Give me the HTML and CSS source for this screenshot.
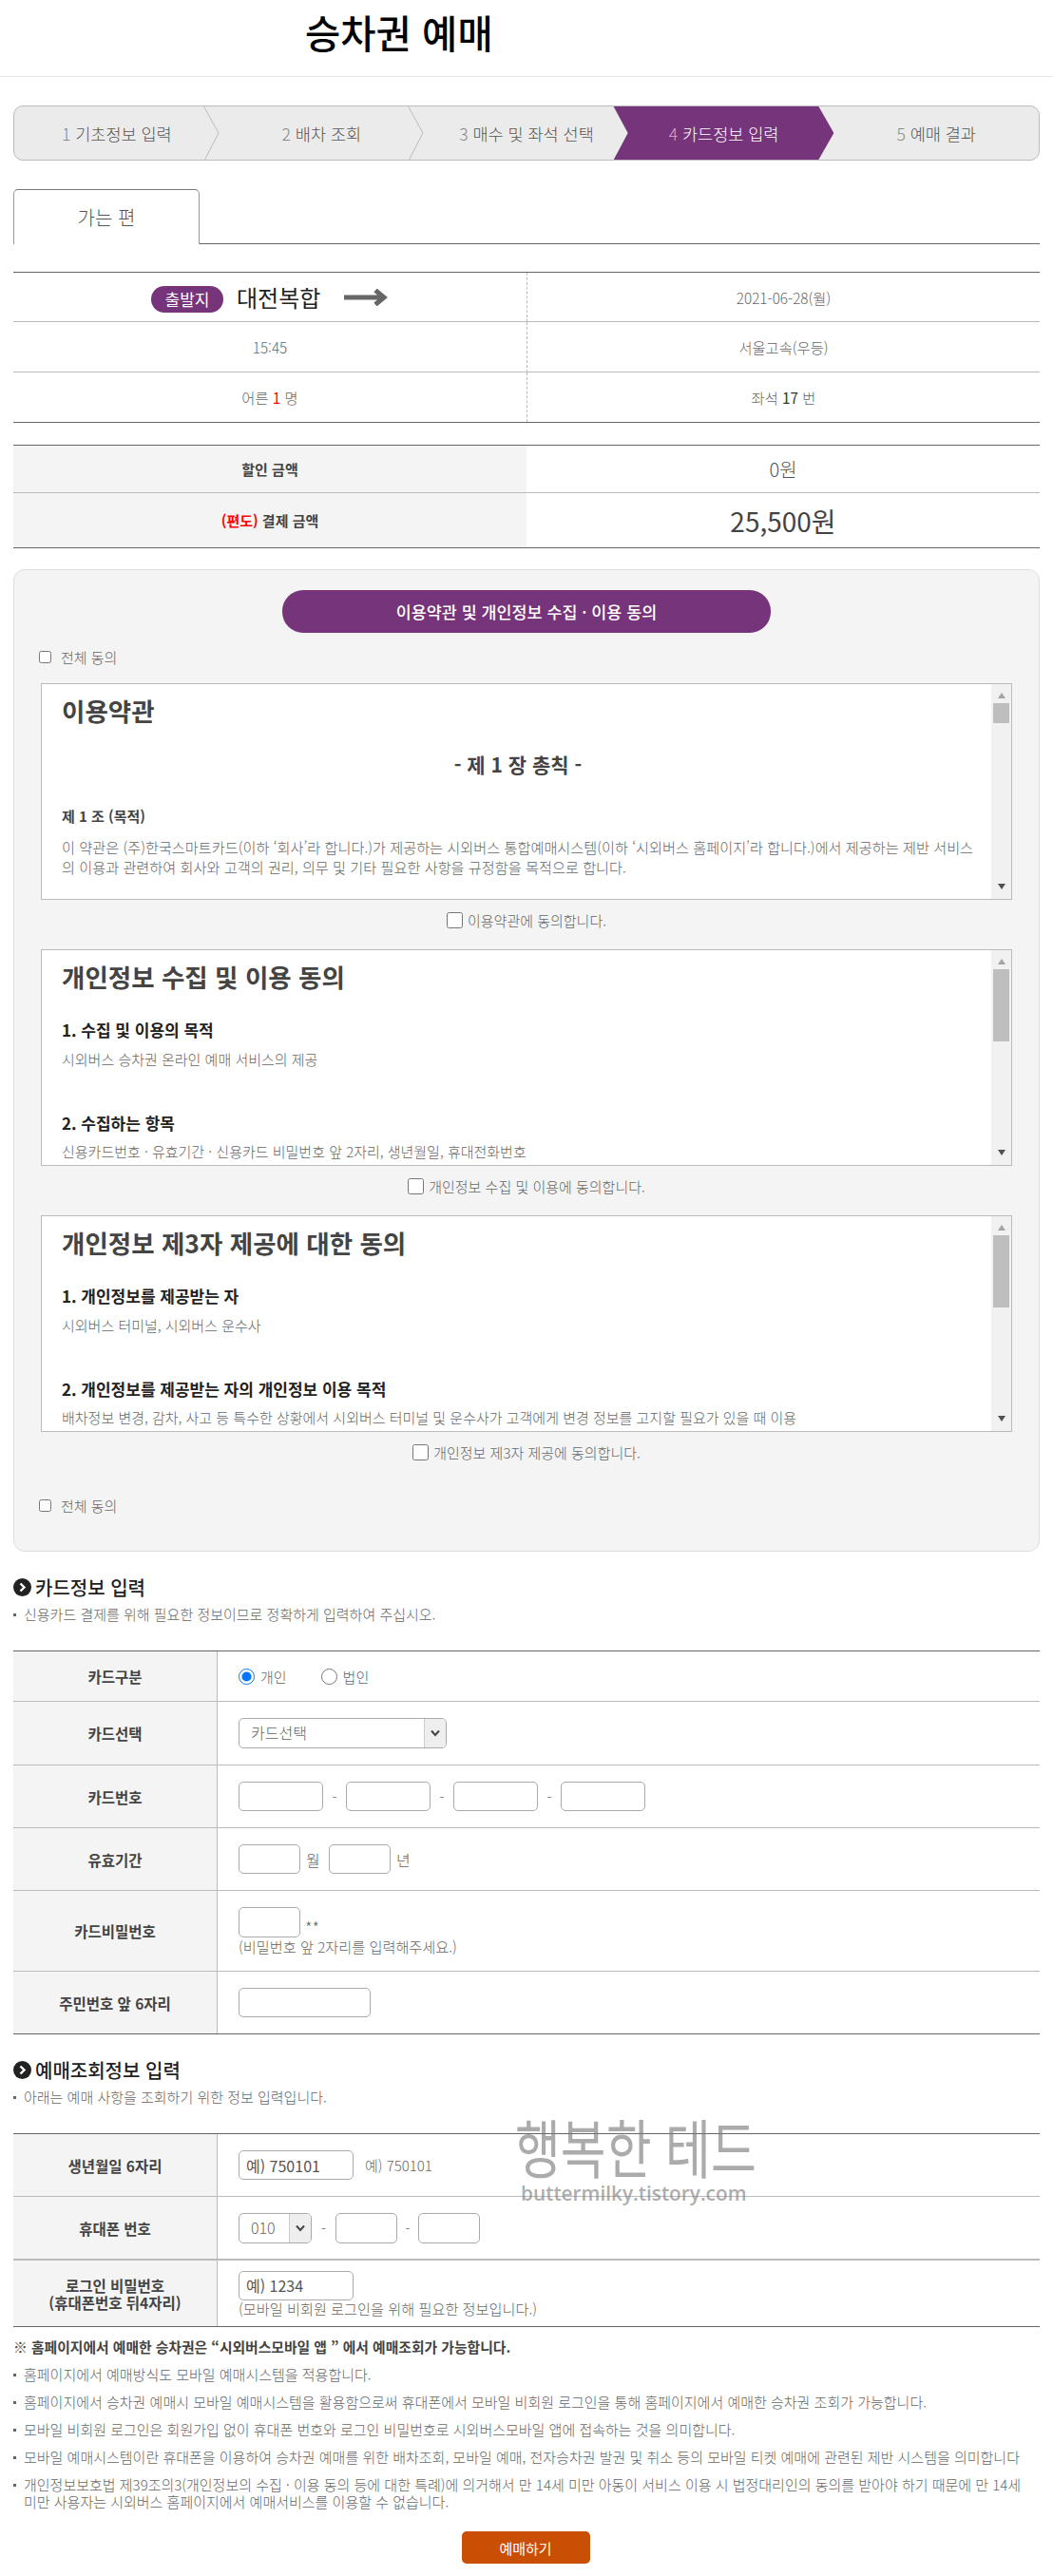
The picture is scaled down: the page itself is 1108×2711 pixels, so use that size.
FILE: index.html
```html
<!DOCTYPE html>
<html lang="ko">
<head>
    <meta charset="UTF-8">
    <meta name="viewport" content="width=device-width, initial-scale=1.0">
    <title>승차권 예매</title>
    <link rel="stylesheet" href="styles.css">
</head>
<body>
    <header class="top">
        <h1>승차권 예매</h1>
    </header>

    <main class="wrap">
        <ol class="steps">
            <li><span><em>1</em> 기초정보 입력</span><svg class="sep" viewBox="0 0 17 58"><path d="M0 0L16 29L1 58"/></svg></li>
            <li><span><em>2</em> 배차 조회</span><svg class="sep" viewBox="0 0 17 58"><path d="M0 0L16 29L1 58"/></svg></li>
            <li><span><em>3</em> 매수 및 좌석 선택</span><svg class="sep" viewBox="0 0 17 58"><path d="M0 0L16 29L1 58"/></svg></li>
            <li class="on"><span><em>4</em> 카드정보 입력</span></li>
            <li><span><em>5</em> 예매 결과</span></li>
        </ol>

        <div class="tabs"><a class="tab">가는 편</a></div>

        <table class="info">
            <tr class="r52">
                <td>
                    <div class="route">
                        <b class="badge">출발지</b>
                        <strong>대전복합</strong>
                        <svg class="go" viewBox="0 0 46 18"><path d="M0 9H42M33 1.5L42 9L33 16.5"/></svg>
                    </div>
                </td>
                <td>2021-06-28(월)</td>
            </tr>
            <tr>
                <td>15:45</td>
                <td>서울고속(우등)</td>
            </tr>
            <tr>
                <td>어른 <b class="red">1</b> 명</td>
                <td>좌석 <b class="num">17</b> 번</td>
            </tr>
        </table>

        <table class="pay">
            <tr class="r50">
                <th>할인 금액</th>
                <td class="zero">0원</td>
            </tr>
            <tr class="r58">
                <th><span class="red">(편도)</span> 결제 금액</th>
                <td class="total">25,500원</td>
            </tr>
        </table>

        <section class="agree">
            <h2 class="pill">이용약관 및 개인정보 수집 · 이용 동의</h2>
            <label class="all first"><input type="checkbox"> 전체 동의</label>

            <div class="term">
                <div class="term-text">
                    <h3>이용약관</h3>
                    <h4 class="chapter">- 제 1 장 총칙 -</h4>
                    <h5 class="article">제 1 조 (목적)</h5>
                    <p class="para">이 약관은 (주)한국스마트카드(이하 ‘회사’라 합니다.)가 제공하는 시외버스 통합예매시스템(이하 ‘시외버스 홈페이지’라 합니다.)에서 제공하는 제반 서비스<br>의 이용과 관련하여 회사와 고객의 권리, 의무 및 기타 필요한 사항을 규정함을 목적으로 합니다.</p>
                </div>
                <div class="bar"><i class="up"></i><i class="thumb"></i><i class="down"></i></div>
            </div>
            <label class="ok"><input type="checkbox"> 이용약관에 동의합니다.</label>

            <div class="term">
                <div class="term-text">
                    <h3>개인정보 수집 및 이용 동의</h3>
                    <h4 class="sub">1. 수집 및 이용의 목적</h4>
                    <p class="line">시외버스 승차권 온라인 예매 서비스의 제공</p>
                    <h4 class="sub next">2. 수집하는 항목</h4>
                    <p class="line">신용카드번호 · 유효기간 · 신용카드 비밀번호 앞 2자리, 생년월일, 휴대전화번호</p>
                </div>
                <div class="bar"><i class="up"></i><i class="thumb long"></i><i class="down"></i></div>
            </div>
            <label class="ok"><input type="checkbox"> 개인정보 수집 및 이용에 동의합니다.</label>

            <div class="term">
                <div class="term-text">
                    <h3>개인정보 제3자 제공에 대한 동의</h3>
                    <h4 class="sub">1. 개인정보를 제공받는 자</h4>
                    <p class="line">시외버스 터미널, 시외버스 운수사</p>
                    <h4 class="sub next">2. 개인정보를 제공받는 자의 개인정보 이용 목적</h4>
                    <p class="line">배차정보 변경, 감차, 사고 등 특수한 상황에서 시외버스 터미널 및 운수사가 고객에게 변경 정보를 고지할 필요가 있을 때 이용</p>
                </div>
                <div class="bar"><i class="up"></i><i class="thumb long"></i><i class="down"></i></div>
            </div>
            <label class="ok"><input type="checkbox"> 개인정보 제3자 제공에 동의합니다.</label>

            <label class="all last"><input type="checkbox"> 전체 동의</label>
        </section>

        <h2 class="sec">
            <svg viewBox="0 0 19 19"><circle cx="9.5" cy="9.5" r="9.5"/><path d="M7.5 5.5L11.5 9.5L7.5 13.5"/></svg>
            카드정보 입력
        </h2>
        <p class="sec-note">신용카드 결제를 위해 필요한 정보이므로 정확하게 입력하여 주십시오.</p>

        <table class="form">
            <tr class="h53">
                <th>카드구분</th>
                <td>
                    <div class="field">
                        <label class="radio"><input type="radio" name="kind" checked> 개인</label>
                        <label class="radio"><input type="radio" name="kind"> 법인</label>
                    </div>
                </td>
            </tr>
            <tr class="h67">
                <th>카드선택</th>
                <td>
                    <div class="select wide"><span>카드선택</span><i><svg viewBox="0 0 10 8"><path d="M1 1.5L5 6L9 1.5"/></svg></i></div>
                </td>
            </tr>
            <tr class="h66">
                <th>카드번호</th>
                <td>
                    <div class="field">
                        <input class="in w89" type="text"><span class="dash">-</span>
                        <input class="in w89" type="text"><span class="dash">-</span>
                        <input class="in w89" type="text"><span class="dash">-</span>
                        <input class="in w89" type="text">
                    </div>
                </td>
            </tr>
            <tr class="h66">
                <th>유효기간</th>
                <td>
                    <div class="field">
                        <input class="in w65" type="text"><span class="unit">월</span>
                        <input class="in w65" type="text"><span class="unit">년</span>
                    </div>
                </td>
            </tr>
            <tr class="h85">
                <th>카드비밀번호</th>
                <td>
                    <div class="field">
                        <input class="in w65 tall" type="password"><span class="stars">**</span>
                    </div>
                    <p class="hint">(비밀번호 앞 2자리를 입력해주세요.)</p>
                </td>
            </tr>
            <tr class="h66">
                <th>주민번호 앞 6자리</th>
                <td><input class="in w139" type="text"></td>
            </tr>
        </table>

        <h2 class="sec">
            <svg viewBox="0 0 19 19"><circle cx="9.5" cy="9.5" r="9.5"/><path d="M7.5 5.5L11.5 9.5L7.5 13.5"/></svg>
            예매조회정보 입력
        </h2>
        <p class="sec-note">아래는 예매 사항을 조회하기 위한 정보 입력입니다.</p>

        <table class="form second">
            <tr class="h66">
                <th>생년월일 6자리</th>
                <td>
                    <div class="field">
                        <input class="in w121" type="text" placeholder="예) 750101">
                        <span class="eg">예) 750101</span>
                    </div>
                </td>
            </tr>
            <tr class="h67 thick">
                <th>휴대폰 번호</th>
                <td>
                    <div class="field">
                        <div class="select narrow"><span>010</span><i><svg viewBox="0 0 10 8"><path d="M1 1.5L5 6L9 1.5"/></svg></i></div>
                        <span class="dash d1">-</span>
                        <input class="in w65 tall" type="text"><span class="dash d2">-</span>
                        <input class="in w65 tall" type="text">
                    </div>
                </td>
            </tr>
            <tr class="h70">
                <th>로그인 비밀번호<br>(휴대폰번호 뒤4자리)</th>
                <td>
                    <input class="in w121" type="text" placeholder="예) 1234">
                    <p class="hint tight">(모바일 비회원 로그인을 위해 필요한 정보입니다.)</p>
                </td>
            </tr>
        </table>

        <p class="notice">※ 홈페이지에서 예매한 승차권은 “시외버스모바일 앱 ” 에서 예매조회가 가능합니다.</p>
        <ul class="list">
            <li>홈페이지에서 예매방식도 모바일 예매시스템을 적용합니다.</li>
            <li>홈페이지에서 승차권 예매시 모바일 예매시스템을 활용함으로써 휴대폰에서 모바일 비회원 로그인을 통해 홈페이지에서 예매한 승차권 조회가 가능합니다.</li>
            <li>모바일 비회원 로그인은 회원가입 없이 휴대폰 번호와 로그인 비밀번호로 시외버스모바일 앱에 접속하는 것을 의미합니다.</li>
            <li>모바일 예매시스템이란 휴대폰을 이용하여 승차권 예매를 위한 배차조회, 모바일 예매, 전자승차권 발권 및 취소 등의 모바일 티켓 예매에 관련된 제반 시스템을 의미합니다</li>
            <li>개인정보보호법 제39조의3(개인정보의 수집 · 이용 동의 등에 대한 특례)에 의거해서 만 14세 미만 아동이 서비스 이용 시 법정대리인의 동의를 받아야 하기 때문에 만 14세<br>미만 사용자는 시외버스 홈페이지에서 예매서비스를 이용할 수 없습니다.</li>
        </ul>

        <div class="submit"><button type="button">예매하기</button></div>
    </main>

    <div class="mark">
        <span class="mark-name">행복한 테드</span>
        <span class="mark-url">buttermilky.tistory.com</span>
    </div>
</body>
</html>
```

FILE: styles.css
```css
*{
    box-sizing: border-box;
}
body{
    margin: 0;
    position: relative;
    font-family: "Noto Sans CJK KR", "Noto Sans", sans-serif;
    font-size: 15px;
    font-weight: 300;
    color: #666;
    background: #fff;
}
h1, h2, h3, h4, h5, p, ol, ul{
    margin: 0;
    padding: 0;
}
table{
    width: 100%;
    border-collapse: separate;
    border-spacing: 0;
    table-layout: fixed;
}
td, th{
    padding: 0;
}

/* page title */
.top{
    height: 81px;
    border-bottom: 1px solid #e5e5e5;
    padding-left: 321px;
}
.top h1{
    font-size: 40.5px;
    line-height: 68px;
    font-weight: 500;
    color: #000;
}
.wrap{
    padding: 0 14px 11px;
}

/* steps */
.steps{
    list-style: none;
    display: flex;
    height: 58px;
    margin-top: 30px;
    background: #ebebeb;
    border: 1px solid #bbb;
    border-radius: 10px;
    overflow: hidden;
}
.steps li{
    flex: 0 0 20%;
    position: relative;
    display: flex;
    align-items: center;
    justify-content: center;
    font-size: 17.5px;
    color: #555;
}
.steps em{
    font-style: normal;
    color: #888;
}
.steps span{
    position: relative;
}
.sep{
    position: absolute;
    right: 0;
    top: -1px;
    width: 17px;
    height: 58px;
}
.sep path{
    fill: none;
    stroke: #bbb;
    stroke-width: 1;
}
.steps .on{
    color: #fff;
    padding-right: 16px;
}
.steps .on em{
    color: #d9a6e0;
}
.steps .on::before{
    content: "";
    position: absolute;
    top: 0;
    bottom: 0;
    left: -16px;
    right: 0;
    background: #76347a;
    clip-path: polygon(0 0, calc(100% - 16px) 0, 100% 50%, calc(100% - 16px) 100%, 0 100%, 15px 50%);
}

/* tab */
.tabs{
    display: flex;
    height: 58px;
    margin-top: 30px;
    border-bottom: 1px solid #666;
}
.tab{
    width: 196px;
    height: 58px;
    background: #fff;
    border: 1px solid #999;
    border-top-color: #777;
    border-bottom: 0;
    border-radius: 5px 5px 0 0;
    text-align: center;
    font-size: 20px;
    line-height: 58px;
    color: #555;
}

/* route info */
.info{
    margin-top: 29px;
    border-top: 1px solid #666;
    border-bottom: 1px solid #666;
    font-size: 15.3px;
    text-align: center;
}
.info td{
    height: 53px;
    border-bottom: 1px solid #bbb;
}
.info tr:last-child td{
    height: 52px;
    border-bottom: 0;
}
.info .r52 td{
    height: 52px;
}
.info td + td{
    border-left: 1px dashed #bbb;
}
.route{
    display: flex;
    align-items: center;
    padding-left: 145px;
}
.badge{
    width: 76px;
    height: 28px;
    margin-top: 4px;
    border-radius: 14px;
    background: #76347a;
    color: #fff;
    font-size: 17px;
    font-weight: 400;
    line-height: 28px;
}
.route strong{
    margin-left: 14px;
    font-size: 24px;
    font-weight: 400;
    color: #222;
}
.go{
    width: 46px;
    height: 18px;
    margin-left: 25px;
}
.go path{
    fill: none;
    stroke: #666;
    stroke-width: 5;
}
.red{
    color: #f00;
    font-weight: 400;
}
.num{
    color: #333;
    font-weight: 400;
}

/* price */
.pay{
    margin-top: 23px;
    border-top: 1px solid #666;
    border-bottom: 1px solid #666;
    text-align: center;
}
.pay th{
    background: #f4f4f4;
    font-size: 15px;
    font-weight: 700;
    color: #444;
}
.pay .r50 th, .pay .r50 td{
    height: 50px;
    border-bottom: 1px solid #bbb;
}
.pay .r58 th, .pay .r58 td{
    height: 57px;
}
.pay .red{
    font-weight: 700;
}
.zero{
    font-size: 20px;
    color: #555;
}
.total{
    font-size: 28px;
    font-weight: 400;
    color: #444;
}

/* agreement box */
.agree{
    margin-top: 22px;
    padding: 21px 28px 38px;
    background: #f4f4f4;
    border: 1px solid #ddd;
    border-radius: 12px;
}
.pill{
    width: 514px;
    height: 45px;
    margin: 0 auto;
    border-radius: 22px;
    background: #76347a;
    color: #fff;
    text-align: center;
    font-size: 17.4px;
    font-weight: 500;
    line-height: 45px;
}
.all{
    display: flex;
    align-items: center;
    height: 20px;
    margin-left: -2px;
    color: #666;
}
.all input{
    width: 13px;
    height: 13px;
    margin: 0 10px 0 0;
}
.all.first{
    margin-top: 15px;
    margin-bottom: 18px;
}
.all.last{
    margin-top: 36px;
}
.term{
    display: flex;
    height: 228px;
    background: #fff;
    border: 1px solid #bbb;
    overflow: hidden;
}
.term-text{
    flex: 1;
    min-width: 0;
    overflow: hidden;
    padding: 10px 18px 0 21px;
}
.term h3{
    font-size: 26.5px;
    line-height: 36px;
    font-weight: 700;
    color: #444;
}
.chapter{
    margin-top: 23px;
    font-size: 21px;
    line-height: 30px;
    font-weight: 700;
    color: #444;
    text-align: center;
}
.article{
    margin-top: 29px;
    font-size: 15px;
    line-height: 22px;
    font-weight: 700;
    color: #444;
}
.para{
    margin-top: 11px;
    font-size: 15.2px;
    line-height: 21px;
    white-space: nowrap;
}
.sub{
    margin-top: 25px;
    font-size: 17px;
    line-height: 26px;
    font-weight: 700;
    color: #222;
}
.sub.next{
    margin-top: 43px;
}
.line{
    margin-top: 7px;
    line-height: 22px;
    white-space: nowrap;
}
.sub.next + .line{
    margin-top: 6px;
}
.bar{
    flex: none;
    display: flex;
    flex-direction: column;
    align-items: center;
    width: 21px;
    background: #f1f1f1;
}
.up{
    margin-top: 9px;
    border-left: 4px solid transparent;
    border-right: 4px solid transparent;
    border-bottom: 6px solid #a3a3a3;
}
.thumb{
    width: 17px;
    height: 21px;
    margin-top: 5px;
    background: #bebebe;
}
.thumb.long{
    height: 76px;
}
.down{
    margin-top: auto;
    margin-bottom: 10px;
    border-left: 4px solid transparent;
    border-right: 4px solid transparent;
    border-top: 6px solid #505050;
}
.ok{
    display: flex;
    align-items: center;
    justify-content: center;
    height: 20px;
    margin: 11px 0 21px;
}
.ok input{
    width: 17px;
    height: 17px;
    margin: 0 5px 0 0;
}

/* section titles */
.sec{
    display: flex;
    align-items: center;
    gap: 4px;
    height: 24px;
    margin-top: 25px;
    font-size: 20px;
    font-weight: 500;
    color: #222;
}
.sec svg{
    width: 19px;
    height: 19px;
}
.sec circle{
    fill: #222;
}
.sec path{
    fill: none;
    stroke: #fff;
    stroke-width: 2.4;
}
.sec-note{
    position: relative;
    margin-top: 7px;
    padding-left: 11px;
    line-height: 20px;
}
.sec-note::before, .list li::before{
    content: "";
    position: absolute;
    left: 0;
    top: 9px;
    width: 3px;
    height: 3px;
    background: #666;
}

/* forms */
.form{
    margin-top: 28px;
    border-top: 1px solid #666;
    border-bottom: 1px solid #666;
}
.form th{
    width: 215px;
    background: #f4f4f4;
    border-right: 1px solid #bbb;
    border-bottom: 1px solid #bbb;
    font-size: 15.5px;
    line-height: 18px;
    font-weight: 700;
    color: #444;
}
.form td{
    padding-left: 22px;
    border-bottom: 1px solid #bbb;
}
.form .thick th, .form .thick td{
    border-bottom-width: 2px;
}
.h53 th, .h53 td{ height: 53px; }
.h66 th, .h66 td{ height: 66px; }
.h67 th, .h67 td{ height: 67px; }
.h70 th, .h70 td{ height: 70px; }
.h85 th, .h85 td{ height: 85px; }
.form tr:last-child th, .form tr:last-child td{
    height: 65px;
    border-bottom: 0;
}
.form.second tr:last-child th, .form.second tr:last-child td{
    height: 69px;
}
.field{
    display: flex;
    align-items: center;
}
.radio{
    display: flex;
    align-items: center;
    margin-right: 36px;
}
.radio input{
    width: 17px;
    height: 17px;
    margin: 0 6px 0 0;
}
.in{
    display: block;
    height: 31px;
    margin: 0;
    padding: 0 7px;
    background: #fff;
    border: 1px solid #aaa;
    border-radius: 5px;
    font-family: inherit;
    font-size: 16px;
    font-weight: 400;
    color: #555;
}
.in::placeholder{
    color: #555;
    opacity: 1;
}
.tall{
    height: 32px;
}
.w65{ width: 65px; }
.w89{ width: 89px; }
.w121{ width: 121px; }
.w139{ width: 139px; }
.dash{
    width: 24px;
    text-align: center;
}
.d1{
    width: 25px;
}
.d2{
    width: 22px;
}
.unit{
    width: 30px;
    padding-left: 6px;
    font-size: 16px;
}
.stars{
    padding: 9px 0 0 5px;
    font-size: 17px;
    line-height: 18px;
    letter-spacing: 0;
}
.hint{
    font-size: 15.2px;
    line-height: 18px;
}
.tight{
    margin-top: -1px;
}
.select{
    display: flex;
    height: 32px;
    background: #fff;
    border: 1px solid #aaa;
    border-radius: 5px;
    overflow: hidden;
}
.select span{
    flex: 1;
    padding-left: 12px;
    font-size: 16px;
    line-height: 29px;
    color: #666;
}
.select i{
    flex: none;
    display: flex;
    align-items: center;
    justify-content: center;
    width: 23px;
    background: #eee;
    border-left: 1px solid #ccc;
}
.select svg{
    width: 10px;
    height: 8px;
}
.select path{
    fill: none;
    stroke: #444;
    stroke-width: 2;
}
.wide{
    width: 219px;
}
.narrow{
    width: 77px;
}
.eg{
    margin-left: 12px;
}

/* bottom notes */
.notice{
    margin-top: 10px;
    font-size: 14.8px;
    line-height: 22px;
    font-weight: 700;
    color: #444;
}
.list{
    list-style: none;
    margin-top: 9px;
}
.list li{
    position: relative;
    margin-bottom: 11px;
    padding-left: 11px;
    line-height: 18px;
}
.list li::before{
    top: 8px;
}
.list li:last-child{
    margin-bottom: 0;
}
.submit{
    display: flex;
    justify-content: center;
    margin-top: 22px;
    padding-right: 2px;
}
.submit button{
    width: 135px;
    height: 34px;
    border: 0;
    border-radius: 5px;
    background: #c94f04;
    color: #fff;
    font-family: inherit;
    font-size: 15px;
    font-weight: 400;
}

/* watermark over the page */
.mark{
    position: absolute;
    left: 542px;
    top: 2230px;
    width: 252px;
    pointer-events: none;
    color: rgba(120, 120, 120, 0.62);
}
.mark-name{
    display: block;
    font-size: 52px;
    line-height: 56px;
    font-weight: 400;
    white-space: nowrap;
    transform: scaleY(1.3);
}
.mark-url{
    display: block;
    margin: 10px 0 0 6px;
    font-family: "Open Sans", sans-serif;
    font-size: 20.8px;
    line-height: 24px;
    font-weight: 600;
    white-space: nowrap;
}
```
